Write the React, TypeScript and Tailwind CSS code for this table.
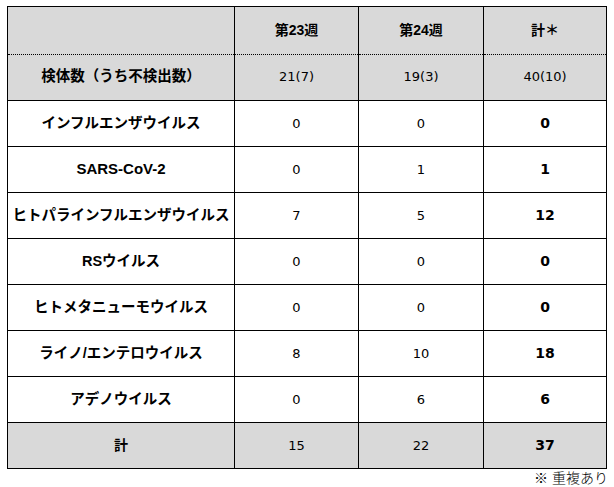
import React from 'react'

interface Row {
  label: string
  w23: string
  w24: string
  total: string
  latin?: boolean
}

const rows: Row[] = [
  { label: 'インフルエンザウイルス', w23: '0', w24: '0', total: '0' },
  { label: 'SARS-CoV-2', w23: '0', w24: '1', total: '1', latin: true },
  { label: 'ヒトパラインフルエンザウイルス', w23: '7', w24: '5', total: '12' },
  { label: 'RSウイルス', w23: '0', w24: '0', total: '0' },
  { label: 'ヒトメタニューモウイルス', w23: '0', w24: '0', total: '0' },
  { label: 'ライノ/エンテロウイルス', w23: '8', w24: '10', total: '18' },
  { label: 'アデノウイルス', w23: '0', w24: '6', total: '6' },
]

const jp = "font-['Liberation_Sans','Noto_Sans_CJK_JP',sans-serif]"
const num = "font-['DejaVu_Sans','Noto_Sans_CJK_JP',sans-serif]"

export default function App() {
  return (
    <div className="w-[614px] h-[487px] bg-white pt-[6px] pl-[7px] text-black">
      <table className="border-collapse table-fixed w-[599px]">
        <colgroup>
          <col className="w-[227px]" />
          <col className="w-[124px]" />
          <col className="w-[125px]" />
          <col className="w-[123px]" />
        </colgroup>
        <thead>
          {/* header */}
          <tr className="h-[47px] bg-[#d9d9d9]">
            <th className="border border-black border-b-0"></th>
            <th className={`border border-black border-b-0 text-[14px] font-bold ${jp}`}>第23週</th>
            <th className={`border border-black border-b-0 text-[14px] font-bold ${jp}`}>第24週</th>
            <th className={`border border-black border-b-0 text-[14px] font-bold ${jp}`}>計＊</th>
          </tr>
        </thead>
        <tbody>
          <tr className="h-[47px] bg-[#d9d9d9]">
            <td className={`border border-black border-t-0 text-center text-[14.5px] font-bold whitespace-nowrap ${jp} relative`}>
              <span className="absolute left-0 right-0 top-0 border-t border-dotted border-black" />
              検体数（うち不検出数）
            </td>
            <td className={`border border-black border-t-0 text-center text-[13px] ${num} relative`}>
              <span className="absolute left-0 right-0 top-0 border-t border-dotted border-black" />
              21(7)
            </td>
            <td className={`border border-black border-t-0 text-center text-[13px] ${num} relative`}>
              <span className="absolute left-0 right-0 top-0 border-t border-dotted border-black" />
              19(3)
            </td>
            <td className={`border border-black border-t-0 text-center text-[13px] ${num} relative`}>
              <span className="absolute left-0 right-0 top-0 border-t border-dotted border-black" />
              40(10)
            </td>
          </tr>
          {rows.map((r) => (
            <tr key={r.label} className="h-[46px]">
              <td className={`border border-black text-center font-bold whitespace-nowrap ${r.latin ? "font-['Liberation_Sans',sans-serif] text-[15px]" : `${jp} text-[14.5px]`}`}>
                {r.label}
              </td>
              <td className={`border border-black text-center text-[13px] ${num}`}>{r.w23}</td>
              <td className={`border border-black text-center text-[13px] ${num}`}>{r.w24}</td>
              <td className={`border border-black text-center text-[14px] font-bold ${num}`}>{r.total}</td>
            </tr>
          ))}
          <tr className="h-[46px] bg-[#d9d9d9]">
            <td className={`border border-black text-center text-[14px] font-bold ${jp}`}>計</td>
            <td className={`border border-black text-center text-[13px] ${num}`}>15</td>
            <td className={`border border-black text-center text-[13px] ${num}`}>22</td>
            <td className={`border border-black text-center text-[14px] font-bold ${num}`}>37</td>
          </tr>
        </tbody>
      </table>
      <div className={`w-[601px] text-right text-[14px] leading-[18px] font-light ${jp}`}>※ 重複あり</div>
    </div>
  )
}
